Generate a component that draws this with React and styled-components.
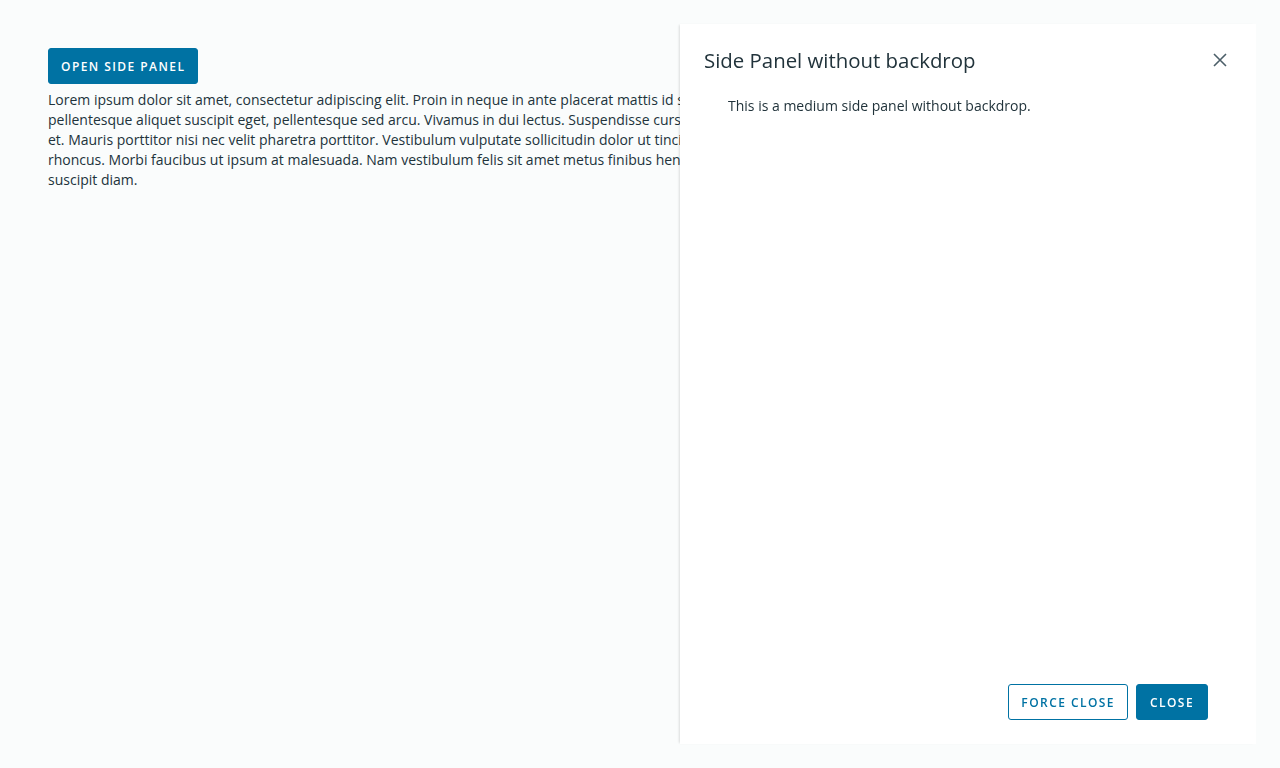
import styled, { createGlobalStyle } from "styled-components";

const GlobalStyle = createGlobalStyle`
  html, body {
    margin: 0;
    padding: 0;
    background: #fafcfc;
  }
  body {
    font-family: "Open Sans", Lato, sans-serif;
    color: #21333b;
  }
`;

const loremLines = [
  "Lorem ipsum dolor sit amet, consectetur adipiscing elit. Proin in neque in ante placerat mattis id sed quam. Proin rhoncus lacus et tempor dignissim. Vivamus sem quam,",
  "pellentesque aliquet suscipit eget, pellentesque sed arcu. Vivamus in dui lectus. Suspendisse cursus est ac nisl imperdiet viverra. Aenean sagittis nibh lacus, in eleifend urna ultrices",
  "et. Mauris porttitor nisi nec velit pharetra porttitor. Vestibulum vulputate sollicitudin dolor ut tincidunt. Phasellus vitae blandit felis. Nullam posuere ipsum tincidunt velit pellentesque",
  "rhoncus. Morbi faucibus ut ipsum at malesuada. Nam vestibulum felis sit amet metus finibus hendrerit. Fusce faucibus odio eget ex vulputate rhoncus. Fusce nec aliquam leo, at",
  "suscipit diam.",
];

const App = () => {
  return (
    <>
      <GlobalStyle />
      <Page>
        <Button>Open side panel</Button>
        <Lorem>
          {loremLines.map((line) => (
            <Line key={line}>{line}</Line>
          ))}
        </Lorem>
      </Page>
      <SidePanel role="dialog" aria-label="Side Panel without backdrop">
        <PanelHeader>
          <PanelTitle>Side Panel without backdrop</PanelTitle>
          <CloseButton aria-label="close">
            <svg width="14" height="14" viewBox="0 0 14 14">
              <path d="M1 1 L13 13 M13 1 L1 13" stroke="#4c5f69" strokeWidth="1.6" fill="none" />
            </svg>
          </CloseButton>
        </PanelHeader>
        <PanelBody>This is a medium side panel without backdrop.</PanelBody>
        <PanelFooter>
          <Button $outline>Force close</Button>
          <Button>Close</Button>
        </PanelFooter>
      </SidePanel>
    </>
  );
};

const Page = styled.main`
  padding: 48px;
  display: flex;
  flex-direction: column;
  align-items: flex-start;
  gap: 6px;
`;

const Button = styled.button`
  height: 36px;
  padding: 0 12px;
  min-width: 72px;
  border-radius: 3px;
  border: 1px solid #0072a3;
  background: ${(p) => (p.$outline ? "#ffffff" : "#0072a3")};
  color: ${(p) => (p.$outline ? "#0072a3" : "#ffffff")};
  font-family: "Open Sans", Lato, sans-serif;
  font-size: 12px;
  font-weight: 600;
  letter-spacing: 0.12em;
  text-transform: uppercase;
  cursor: pointer;
`;

const Lorem = styled.p`
  margin: 0;
  width: 632px;
  overflow: hidden;
  font-size: 14px;
  line-height: 20px;
  color: #21333b;
`;

const Line = styled.span`
  display: block;
  white-space: nowrap;
`;

const SidePanel = styled.aside`
  position: fixed;
  top: 24px;
  right: 24px;
  bottom: 24px;
  width: 576px;
  background: #ffffff;
  box-shadow: -2px 0 2px -1px rgba(0, 0, 0, 0.12);
  display: flex;
  flex-direction: column;
`;

const PanelHeader = styled.header`
  display: flex;
  align-items: center;
  justify-content: space-between;
  padding: 24px 24px 0 24px;
`;

const PanelTitle = styled.h3`
  margin: 0;
  font-size: 20.4px;
  line-height: 24px;
  font-weight: 400;
  color: #21333b;
`;

const CloseButton = styled.button`
  width: 24px;
  height: 24px;
  padding: 0;
  border: none;
  background: transparent;
  display: flex;
  align-items: center;
  justify-content: center;
  cursor: pointer;
`;

const PanelBody = styled.div`
  flex: 1;
  padding: 24px 48px 0 48px;
  font-size: 14px;
  line-height: 20px;
  color: #21333b;
`;

const PanelFooter = styled.footer`
  display: flex;
  justify-content: flex-end;
  gap: 8px;
  padding: 24px 48px 24px 24px;
`;

export default App;
